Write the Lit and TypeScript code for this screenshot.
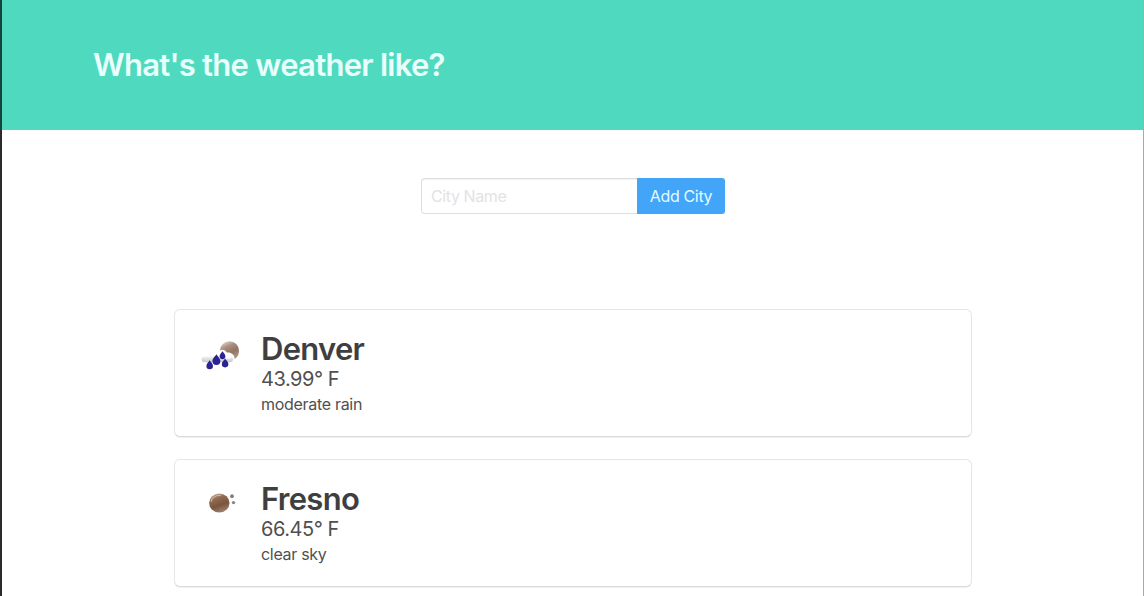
import { LitElement, html, css, svg } from "lit";
import { customElement, property } from "lit/decorators.js";

interface Weather {
  city: string;
  temp: string;
  summary: string;
  icon: "rain" | "clear";
}

const CITIES: Weather[] = [
  { city: "Denver", temp: "43.99° F", summary: "moderate rain", icon: "rain" },
  { city: "Fresno", temp: "66.45° F", summary: "clear sky", icon: "clear" },
];

const gradients = svg`
  <defs>
    <linearGradient id="moon" x1="0.2" y1="0" x2="0.65" y2="1">
      <stop offset="0" stop-color="#e2d8d0"></stop>
      <stop offset="0.3" stop-color="#a98f7f"></stop>
      <stop offset="0.6" stop-color="#927563"></stop>
      <stop offset="1" stop-color="#b09b8d"></stop>
    </linearGradient>
    <linearGradient id="disc" x1="0.2" y1="0" x2="0.6" y2="1">
      <stop offset="0" stop-color="#cbb5a6"></stop>
      <stop offset="0.3" stop-color="#916a51"></stop>
      <stop offset="0.65" stop-color="#7b543d"></stop>
      <stop offset="1" stop-color="#9d8271"></stop>
    </linearGradient>
    <linearGradient id="cloud" x1="0" y1="0" x2="0" y2="1">
      <stop offset="0" stop-color="#f3f3f4"></stop>
      <stop offset="1" stop-color="#c6c7cc"></stop>
    </linearGradient>
  </defs>`;

const drop = (x: number, y: number, s: number) => svg`
  <path transform="translate(${x} ${y}) scale(${s})" fill="#2b2391"
    d="M0 -4.6C.8 -2.9 3.3 -1.3 3.3 1.1A3.3 3.3 0 0 1 -3.3 1.1C-3.3 -1.3 -.8 -2.9 0 -4.6Z"></path>`;

const rainIcon = svg`
  <circle cx="34.5" cy="20.9" r="9.6" fill="url(#moon)"></circle>
  <path fill="#fff" d="M18.5 28.5C19 25 22 25.5 23 23.5C24 18.8 30 18.4 31.8 22.6C35.5 21.8 39.6 24.5 39.6 28.5L37 32L20 32Z"></path>
  <rect x="6.5" y="26.4" width="31.5" height="5.8" rx="2.9" fill="url(#cloud)"></rect>
  <path fill="#fff" d="M22 28C23 23 33 22 36.5 27.3L35 28.6L24 28.6Z"></path>
  ${drop(14.7, 34.8, 1)}${drop(21.4, 29.8, 1.2)}${drop(27.5, 25.3, 0.88)}${drop(30.1, 33, 1)}`;

const clearIcon = svg`
  <ellipse cx="24.3" cy="23" rx="10.2" ry="9.6" fill="url(#disc)"></ellipse>
  <path d="M16.2 21.5C17 17.5 21 15.2 25.5 15.3" fill="none" stroke="#dccabe" stroke-width="1.1" stroke-linecap="round" opacity=".8"></path>
  <circle cx="37" cy="16.2" r="1.9" fill="#827c7b"></circle>
  <circle cx="38.5" cy="22.6" r="1.7" fill="#8b8583"></circle>`;

@customElement("weather-card")
export class WeatherCard extends LitElement {
  @property({ attribute: false }) weather!: Weather;

  static styles = css`
    :host {
      display: flex;
      box-sizing: border-box;
      height: 128px;
      padding: 20px;
      gap: 16px;
      border: 1px solid #e6e6e6;
      border-bottom-color: #dadada;
      border-radius: 6px;
      box-shadow: 0 1px 0 #f1f1f1;
      background: #fff;
      color: #505050;
    }
    .icon {
      flex: none;
      width: 50px;
      height: 50px;
    }
    .body {
      padding-top: 2px;
      white-space: nowrap;
    }
    .city {
      margin: 0 0 1px;
      font-size: 31px;
      line-height: 34px;
      font-weight: 600;
      letter-spacing: -0.7px;
      color: #3f3f3f;
    }
    .temp {
      margin: 0;
      font-size: 20px;
      line-height: 24px;
      letter-spacing: -0.45px;
    }
    .summary {
      margin: 0;
      font-size: 16px;
      line-height: 26px;
      letter-spacing: -0.3px;
    }
  `;

  render() {
    const w = this.weather;
    return html`
      <svg class="icon" viewBox="0 0 50 50" aria-hidden="true">
        ${gradients}${w.icon === "rain" ? rainIcon : clearIcon}
      </svg>
      <div class="body">
        <h2 class="city">${w.city}</h2>
        <p class="temp">${w.temp}</p>
        <p class="summary">${w.summary}</p>
      </div>
    `;
  }
}

@customElement("app-root")
export class AppRoot extends LitElement {
  static styles = css`
    :host {
      display: block;
      position: relative;
      box-sizing: border-box;
      height: 596px;
      overflow: hidden;
      background: #fff;
      font-family: Inter, "Liberation Sans", sans-serif;
    }
    .edge {
      position: absolute;
      top: 0;
      bottom: 0;
      pointer-events: none;
    }
    .edge.left {
      left: 0;
      width: 2px;
      background: #2b2b2d;
    }
    .edge.left::before {
      content: "";
      display: block;
      height: 130px;
      background: #14453c;
    }
    .edge.right {
      right: 0;
      width: 1px;
      background: #a9a9a9;
    }
    .hero {
      display: flex;
      align-items: center;
      box-sizing: border-box;
      height: 130px;
      padding: 0 93px 1px;
      background: #4fdac0;
    }
    .title {
      margin: 0;
      font-size: 31px;
      line-height: 37px;
      font-weight: 600;
      letter-spacing: -0.72px;
      color: #e9fffb;
      white-space: nowrap;
    }
    .form {
      display: flex;
      width: 304px;
      height: 36px;
      margin: 48px 0 0 421px;
    }
    .field {
      box-sizing: border-box;
      flex: 1;
      min-width: 0;
      height: 36px;
      padding: 0 9px;
      border: 1px solid #dedede;
      border-right: 0;
      border-radius: 4px 0 0 4px;
      box-shadow: inset 0 1px 1px rgba(10, 10, 10, 0.05);
      background: #fff;
      font: 16px/24px Inter, "Liberation Sans", sans-serif;
      letter-spacing: -0.4px;
      outline: none;
    }
    .field::placeholder {
      color: #e3e3e3;
      opacity: 1;
    }
    .add {
      box-sizing: border-box;
      flex: none;
      width: 88px;
      height: 36px;
      padding: 0;
      border: 0;
      border-radius: 0 3px 3px 0;
      background: #42a5f8;
      color: #e2fbff;
      font: 16px/24px Inter, "Liberation Sans", sans-serif;
      letter-spacing: -0.35px;
    }
    .cards {
      display: grid;
      gap: 22px;
      width: 798px;
      margin: 95px 0 0 174px;
    }
  `;

  render() {
    return html`
      <header class="hero"><h1 class="title">What's the weather like?</h1></header>
      <form class="form" @submit=${(e: Event) => e.preventDefault()}>
        <input class="field" type="text" placeholder="City Name" />
        <button class="add" type="submit">Add City</button>
      </form>
      <main class="cards">
        ${CITIES.map((c) => html`<weather-card .weather=${c}></weather-card>`)}
      </main>
      <div class="edge left"></div>
      <div class="edge right"></div>
    `;
  }
}
